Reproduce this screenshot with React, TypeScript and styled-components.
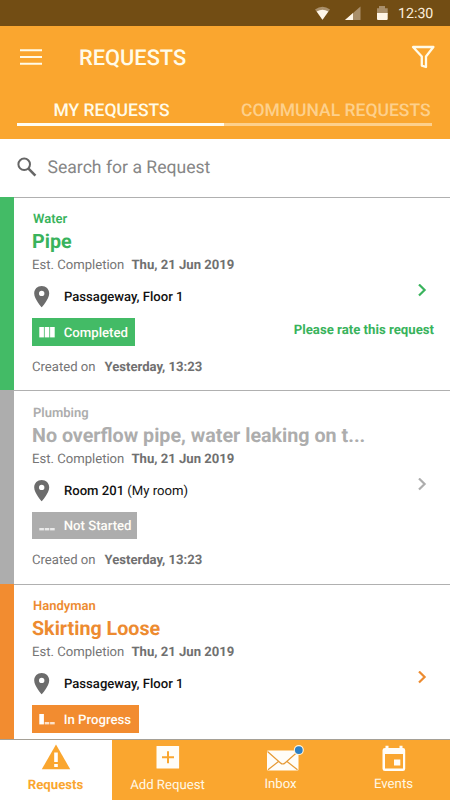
import React from "react";
import styled, { createGlobalStyle } from "styled-components";

const GlobalStyle = createGlobalStyle`
  *, *::before, *::after { box-sizing: border-box; }
  body { margin: 0; background: #fff; font-family: Roboto, "Liberation Sans", sans-serif; text-rendering: geometricPrecision; }
`;

const orange = "#faa62f";

const Screen = styled.div`
  width: 450px;
  height: 800px;
  display: flex;
  flex-direction: column;
  overflow: hidden;
  background: #fff;
`;

const StatusBar = styled.div`
  height: 26px;
  flex: none;
  background: #724d14;
  display: flex;
  align-items: center;
  justify-content: flex-end;
  padding: 0 15px 0 0;
  color: #fbeedb;
  font-size: 14.2px;
  svg { display: block; }
`;

const Clock = styled.span`
  margin-left: 9px;
  padding-top: 2px;
  width: 37px;
  white-space: nowrap;
`;

const Header = styled.header`
  height: 113px;
  flex: none;
  background: ${orange};
  display: flex;
  flex-direction: column;
`;

const TitleBar = styled.div`
  height: 64px;
  display: flex;
  align-items: center;
  padding: 0 14px 2px 19px;
  svg { display: block; }
`;

const PageTitle = styled.h1`
  margin: 4px 0 0 36px;
  flex: 1;
  font-size: 21.8px;
  font-weight: 500;
  line-height: 26px;
  color: #fffbe9;
`;

const Tabs = styled.div`
  display: grid;
  grid-template-columns: 207px 208px;
  margin-left: 17px;
  height: 36px;
`;

const Tab = styled.div<{ $active?: boolean }>`
  border-bottom: 3px solid ${(p) => (p.$active ? "#fffdf3" : "#fdd08c")};
  color: ${(p) => (p.$active ? "#fffbe9" : "#fdd08c")};
  padding: ${(p) => (p.$active ? "11px 0 0 36.5px" : "11px 0 0 17px")};
  font-size: 17.5px;
  font-weight: 500;
  line-height: 20px;
  white-space: nowrap;
`;

const SearchBar = styled.div`
  height: 58px;
  flex: none;
  display: flex;
  align-items: center;
  padding: 0 0 1px 17px;
  color: #868686;
  font-size: 17.6px;
  svg { display: block; margin: -1px 10.5px 0 0; }
`;

const SearchText = styled.span`
  padding-top: 1px;
`;

const List = styled.main`
  flex: 1;
  min-height: 0;
  overflow: hidden;
`;

const Card = styled.article`
  height: 193.4px;
  display: flex;
`;

const Stripe = styled.div<{ $tone: string }>`
  width: 14px;
  flex: none;
  background: ${(p) => p.$tone};
`;

const CardBody = styled.div`
  flex: 1;
  min-width: 0;
  border-top: 1px solid #b0b0b0;
  padding: 13.4px 16px 0 18px;
  display: flex;
  flex-direction: column;
`;

const Category = styled.div<{ $tone: string }>`
  height: 17px;
  line-height: 18px;
  padding-left: 1px;
  font-size: 13px;
  font-weight: 600;
  color: ${(p) => p.$tone};
`;

const CardTitle = styled.h2<{ $tone: string }>`
  margin: 0;
  height: 27px;
  line-height: 28px;
  font-size: 19.7px;
  font-weight: 700;
  white-space: nowrap;
  color: ${(p) => p.$tone};
`;

const Meta = styled.div<{ $gap: number }>`
  height: 20px;
  line-height: 22px;
  font-size: 13.1px;
  color: #757575;
  white-space: nowrap;
  strong { margin-left: ${(p) => p.$gap}px; font-weight: 700; color: #707070; }
`;

const Place = styled.div`
  height: 43.1px;
  display: flex;
  align-items: center;
  font-size: 13.1px;
  color: #111;
  svg { display: block; margin: 0 13px 0 1px; }
  strong { font-weight: 500; }
`;

const PlaceText = styled.span`
  flex: 1;
  padding-top: 1.5px;
  white-space: pre;
`;

const ChevronBox = styled.span`
  align-self: flex-start;
  margin: 9px 7px 0 0;
  svg { margin: 0; }
`;

const StatusRow = styled.div`
  height: 28px;
  display: flex;
  justify-content: space-between;
`;

const Badge = styled.div<{ $tone: string; $width: number }>`
  width: ${(p) => p.$width}px;
  height: 27.5px;
  display: flex;
  align-items: center;
  padding: 2px 0 0 7px;
  background: ${(p) => p.$tone};
  color: #fffdf8;
  font-size: 13.2px;
  font-weight: 500;
  white-space: nowrap;
  svg { display: block; margin: -2px 8.7px 0 0; }
`;

const RateLink = styled.span<{ $tone: string }>`
  color: ${(p) => p.$tone};
  font-size: 13.2px;
  font-weight: 700;
  line-height: 25px;
`;

const Created = styled(Meta)`
  margin-top: 10.5px;
`;

const BottomNav = styled.nav`
  height: 61px;
  flex: none;
  display: grid;
  grid-template-columns: 112px 112px 114px 112px;
  border-top: 1px solid #a5a096;
  background: ${orange};
`;

const NavItem = styled.div<{ $active?: boolean }>`
  display: flex;
  flex-direction: column;
  align-items: center;
  padding: 4px 0 0 0;
  background: ${(p) => (p.$active ? "#fff" : orange)};
  color: ${(p) => (p.$active ? orange : "#fff8e6")};
  font-size: 13.2px;
  font-weight: ${(p) => (p.$active ? 700 : 400)};
  line-height: 16px;
  svg { display: block; overflow: visible; margin-right: 1px; }
`;

const NavLabel = styled.span<{ $drop: number }>`
  margin: ${(p) => p.$drop + 1}px 1px 0 0;
  white-space: nowrap;
`;

const StatusIcons = () => (
  <svg width="74" height="15" viewBox="0 0 74 15">
    <path d="M0 3.4Q7.5-2 15 3.4L7.5 13.8Z" fill="#a98f6b" />
    <path d="M1.7 5.4Q7.5 2 13.3 5.4L7.5 13.8Z" fill="#fff6e8" />
    <path d="M45.5 0.4V14H30Z" fill="#a98f6b" />
    <path d="M38 7V14H30Z" fill="#fff6e8" />
    <path d="M62 2.2h2V0h6v2.2h2.7V8H62Z" fill="#a98f6b" />
    <path d="M62 7h10.7V13q0 1-1 1H63q-1 0-1-1Z" fill="#fff6e8" />
  </svg>
);

const MenuIcon = () => (
  <svg width="24" height="18" viewBox="0 0 24 18">
    <path d="M1 2.2h22M1 9h22M1 15.8h22" stroke="#fffbe9" strokeWidth="2.1" />
  </svg>
);

const FilterIcon = () => (
  <svg width="26" height="24" viewBox="0 0 26 24">
    <path d="M3 2H23.4L16 11.5V22L11.8 20.6V11.5Z" fill="none" stroke="#fffbe9" strokeWidth="2.3" strokeLinejoin="round" />
  </svg>
);

const SearchIcon = () => (
  <svg width="20" height="20" viewBox="0 0 20 20">
    <circle cx="7.2" cy="7.3" r="5.8" fill="none" stroke="#666" strokeWidth="2" />
    <path d="M11.5 11.7L18.4 18.6" stroke="#666" strokeWidth="2.6" />
  </svg>
);

const PinIcon = () => (
  <svg width="18" height="23" viewBox="0 0 18 23">
    <path fillRule="evenodd" d="M8.7 1C4.4 1 1.2 4.2 1.2 8.4c0 5.4 7.5 13.9 7.5 13.9s7.5-8.5 7.5-13.9C16.2 4.2 13 1 8.7 1Zm0 4.7a2.7 2.7 0 1 1 0 5.4 2.7 2.7 0 0 1 0-5.4Z" fill="#6c6c6c" />
  </svg>
);

const Chevron = ({ tone }: { tone: string }) => (
  <svg width="10" height="14" viewBox="0 0 10 14">
    <path d="M2 0.5L7.6 6L2 11.5" fill="none" stroke={tone} strokeWidth="2.2" />
  </svg>
);

const ProgressIcon = ({ filled }: { filled: number }) => (
  <svg width="16" height="11" viewBox="0 0 16 11">
    {[0, 1, 2].map((i) => (
      <rect key={i} x={0.3 + i * 5.4} y={i < filled ? 0 : 8} width="4.6" height={i < filled ? 10.4 : 2.4} fill="#fff" opacity={i < filled ? 1 : 0.75} />
    ))}
  </svg>
);

const WarningIcon = () => (
  <svg width="30" height="26" viewBox="0 0 30 26">
    <path d="M15 .5L29.2 25.2H.8Z" fill={orange} />
    <path d="M13.2 8.5h3.6V18h-3.6ZM13.2 20h3.6v3h-3.6Z" fill="#fff" />
  </svg>
);

const AddIcon = () => (
  <svg width="24" height="24" viewBox="0 0 24 24">
    <rect x=".5" y="1.9" width="22.6" height="22.6" rx=".6" fill="#fffdf8" />
    <path d="M6 13.2h12M12 7.2v12" stroke={orange} strokeWidth="2" />
  </svg>
);

const MailIcon = () => (
  <svg width="32" height="24" viewBox="0 0 32 24">
    <g transform="translate(2 3)">
      <rect x="0" y="3.5" width="31.5" height="20" rx="1" fill="#fffdf8" />
      <path d="M.5 4.5L13.5 16Q15.8 18 18 16L31 4.5M1 22.7L11.5 14.5M30.5 22.7L20 14.5" fill="none" stroke="#e69a35" strokeWidth="1.2" />
      <circle cx="31.8" cy="3.1" r="5" fill="#fff4da" />
      <circle cx="31.8" cy="3.1" r="3.9" fill="#2c80c6" />
    </g>
  </svg>
);

const CalendarIcon = () => (
  <svg width="24" height="27" viewBox="0 0 24 27">
    <g transform="translate(0 1)">
      <path fillRule="evenodd" d="M3.5.8h3V3h11V.8h3V3h.5q2.2 0 2.2 2.2v18.6q0 2.2-2.2 2.2H3Q.5 26 .5 23.8V5.2Q.5 3 3 3h.5ZM3 9v14.5h18V9Z" fill="#fffdf8" />
      <rect x="12" y="14.5" width="6.3" height="6" fill="#fffdf8" />
    </g>
  </svg>
);

type Request = {
  category: string;
  title: string;
  tone: string;
  text: string;
  place: string;
  note?: string;
  status: string;
  filled: number;
  badgeWidth: number;
  rate?: boolean;
  created?: string;
};

const requests: Request[] = [
  { category: "Water", title: "Pipe", tone: "#43bb66", text: "#39b35c", place: "Passageway, Floor 1", status: "Completed", filled: 3, badgeWidth: 103, rate: true, created: "Yesterday, 13:23" },
  { category: "Plumbing", title: "No overflow pipe, water leaking on t...", tone: "#adadad", text: "#adadad", place: "Room 201", note: " (My room)", status: "Not Started", filled: 0, badgeWidth: 105, created: "Yesterday, 13:23" },
  { category: "Handyman", title: "Skirting Loose", tone: "#f28c30", text: "#ed8b30", place: "Passageway, Floor 1", status: "In Progress", filled: 1, badgeWidth: 107 },
];

const RequestCard = ({ item }: { item: Request }) => (
  <Card>
    <Stripe $tone={item.tone} />
    <CardBody>
      <Category $tone={item.text}>{item.category}</Category>
      <CardTitle $tone={item.text}>{item.title}</CardTitle>
      <Meta $gap={7.2}>Est. Completion<strong>Thu, 21 Jun 2019</strong></Meta>
      <Place>
        <PinIcon />
        <PlaceText><strong>{item.place}</strong>{item.note}</PlaceText>
        <ChevronBox><Chevron tone={item.text} /></ChevronBox>
      </Place>
      <StatusRow>
        <Badge $tone={item.tone} $width={item.badgeWidth}>
          <ProgressIcon filled={item.filled} />
          {item.status}
        </Badge>
        {item.rate && <RateLink $tone={item.text}>Please rate this request</RateLink>}
      </StatusRow>
      {item.created && <Created $gap={9}>Created on<strong>{item.created}</strong></Created>}
    </CardBody>
  </Card>
);

export default function App() {
  return (
    <>
      <GlobalStyle />
      <Screen>
        <StatusBar>
          <StatusIcons />
          <Clock>12:30</Clock>
        </StatusBar>
        <Header>
          <TitleBar>
            <MenuIcon />
            <PageTitle>REQUESTS</PageTitle>
            <FilterIcon />
          </TitleBar>
          <Tabs>
            <Tab $active>MY REQUESTS</Tab>
            <Tab>COMMUNAL REQUESTS</Tab>
          </Tabs>
        </Header>
        <SearchBar>
          <SearchIcon />
          <SearchText>Search for a Request</SearchText>
        </SearchBar>
        <List>
          {requests.map((item) => (
            <RequestCard key={item.category} item={item} />
          ))}
        </List>
        <BottomNav>
          <NavItem $active><WarningIcon /><NavLabel $drop={7}>Requests</NavLabel></NavItem>
          <NavItem><AddIcon /><NavLabel $drop={9}>Add Request</NavLabel></NavItem>
          <NavItem><MailIcon /><NavLabel $drop={8}>Inbox</NavLabel></NavItem>
          <NavItem><CalendarIcon /><NavLabel $drop={5}>Events</NavLabel></NavItem>
        </BottomNav>
      </Screen>
    </>
  );
}
